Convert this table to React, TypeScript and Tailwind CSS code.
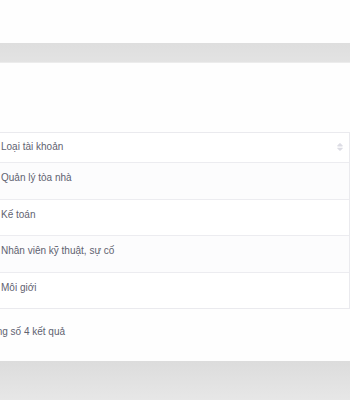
import { FaSort } from "react-icons/fa";

const roles = ["Quản lý tòa nhà", "Kế toán", "Nhân viên kỹ thuật, sự cố", "Môi giới"];

export default function App() {
  return (
    <div className="w-[350px] h-[400px] overflow-hidden bg-[#fefefe] font-['Liberation_Sans',Arial,sans-serif] text-[10px] text-[#5f6270] flex flex-col">
      <div className="h-[43px] shrink-0" />
      <div className="h-[20px] shrink-0 bg-gradient-to-b from-[#dedede] to-[#e3e3e3] border-b border-[#ececec]" />
      <div className="h-[69px] shrink-0" />

      <div className="-ml-[9px] w-[359px] border border-[#eaeaee] bg-white shrink-0">
        <div className="flex items-center justify-between pl-[9px] pr-[4px] pt-[7px] pb-[8px] leading-[14px]">
          <span>Loại tài khoản</span>
          <FaSort className="text-[#dcdce4] text-[10px]" />
        </div>
        {roles.map((role, i) => (
          <div
            key={role}
            className={`border-t border-[#ececf0] pl-[9px] pt-2 pb-[13.5px] leading-[14px] ${i % 2 === 0 ? "bg-[#fcfcfd]" : "bg-white"}`}
          >
            {role}
          </div>
        ))}
      </div>

      <div className="-ml-[15px] pt-[16px] leading-[14px] shrink-0">Tổng số 4 kết quả</div>

      <div className="h-[22px] shrink-0" />
      <div className="flex-1 bg-gradient-to-b from-[#dcdcdc] to-[#e7e7e7]" />
    </div>
  );
}
